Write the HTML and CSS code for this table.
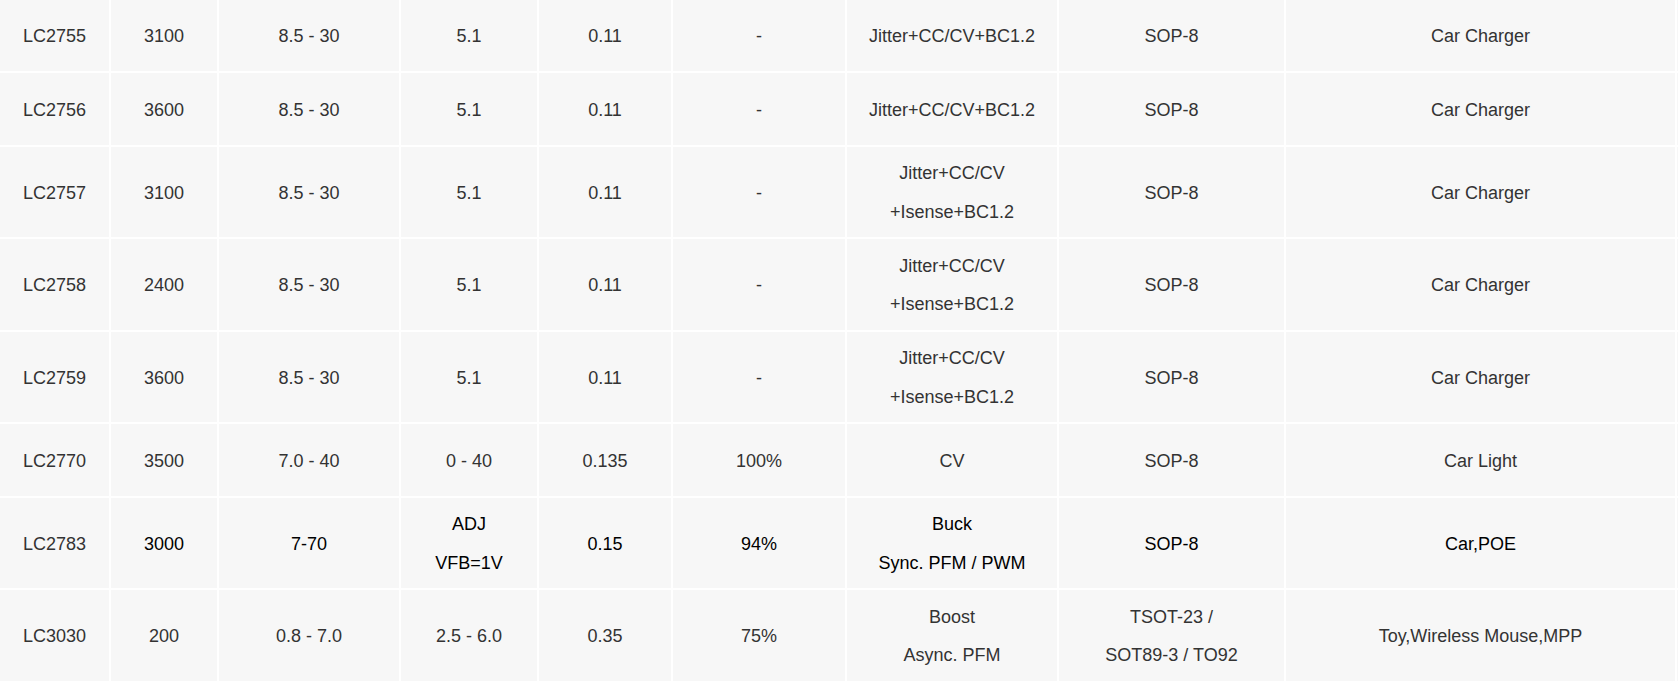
FILE: index.html
```html
<!DOCTYPE html>
<html lang="en">
<head>
<meta charset="utf-8">
<title>Products</title>
<link rel="stylesheet" href="styles.css">
</head>
<body>
<div class="wrap">
<table class="spec">
<colgroup>
<col class="c1"><col class="c2"><col class="c3"><col class="c4"><col class="c5"><col class="c6"><col class="c7"><col class="c8"><col class="c9"><col class="c10">
</colgroup>
<tbody>
<tr class="single first"><td>LC2755</td><td>3100</td><td>8.5 - 30</td><td>5.1</td><td>0.11</td><td>-</td><td>Jitter+CC/CV+BC1.2</td><td>SOP-8</td><td>Car Charger</td><td></td></tr>
<tr class="single"><td>LC2756</td><td>3600</td><td>8.5 - 30</td><td>5.1</td><td>0.11</td><td>-</td><td>Jitter+CC/CV+BC1.2</td><td>SOP-8</td><td>Car Charger</td><td></td></tr>
<tr><td>LC2757</td><td>3100</td><td>8.5 - 30</td><td>5.1</td><td>0.11</td><td>-</td><td>Jitter+CC/CV<br>+Isense+BC1.2</td><td>SOP-8</td><td>Car Charger</td><td></td></tr>
<tr><td>LC2758</td><td>2400</td><td>8.5 - 30</td><td>5.1</td><td>0.11</td><td>-</td><td>Jitter+CC/CV<br>+Isense+BC1.2</td><td>SOP-8</td><td>Car Charger</td><td></td></tr>
<tr><td>LC2759</td><td>3600</td><td>8.5 - 30</td><td>5.1</td><td>0.11</td><td>-</td><td>Jitter+CC/CV<br>+Isense+BC1.2</td><td>SOP-8</td><td>Car Charger</td><td></td></tr>
<tr class="single"><td>LC2770</td><td>3500</td><td>7.0 - 40</td><td>0 - 40</td><td>0.135</td><td>100%</td><td>CV</td><td>SOP-8</td><td>Car Light</td><td></td></tr>
<tr class="dark"><td class="part">LC2783</td><td>3000</td><td>7-70</td><td>ADJ<br>VFB=1V</td><td>0.15</td><td>94%</td><td>Buck<br>Sync. PFM / PWM</td><td>SOP-8</td><td>Car,POE</td><td></td></tr>
<tr><td>LC3030</td><td>200</td><td>0.8 - 7.0</td><td>2.5 - 6.0</td><td>0.35</td><td>75%</td><td>Boost<br>Async. PFM</td><td>TSOT-23 /<br>SOT89-3 / TO92</td><td>Toy,Wireless Mouse,MPP</td><td></td></tr>
</tbody>
</table>
</div>
</body>
</html>
```
FILE: styles.css
```css
html, body {
  margin: 0;
  padding: 0;
  background: #ffffff;
}

.wrap {
  width: 100%;
  height: 682px;
  overflow: hidden;
}

.spec {
  table-layout: fixed;
  width: 1781px;
  border-collapse: separate;
  border-spacing: 2px;
  margin: -2px 0 0 -2px;
  font-family: "Liberation Sans", Arial, sans-serif;
  font-size: 18px;
  color: #333333;
  background: #ffffff;
}

.c1 { width: 109px; }
.c2 { width: 106px; }
.c3 { width: 180px; }
.c4 { width: 136px; }
.c5 { width: 132px; }
.c6 { width: 172px; }
.c7 { width: 210px; }
.c8 { width: 225px; }
.c9 { width: 389px; }
.c10 { width: 100px; }

.spec td {
  background: #f7f7f7;
  text-align: center;
  vertical-align: middle;
  padding: 7.75px 0 5.75px;
  line-height: 38.5px;
  white-space: nowrap;
}

.spec tr.single {
  height: 71.5px;
}

.spec tr.first {
  height: 71px;
}

.spec tr.dark td {
  color: #000000;
}

.spec tr.dark td.part {
  color: #333333;
}
```
